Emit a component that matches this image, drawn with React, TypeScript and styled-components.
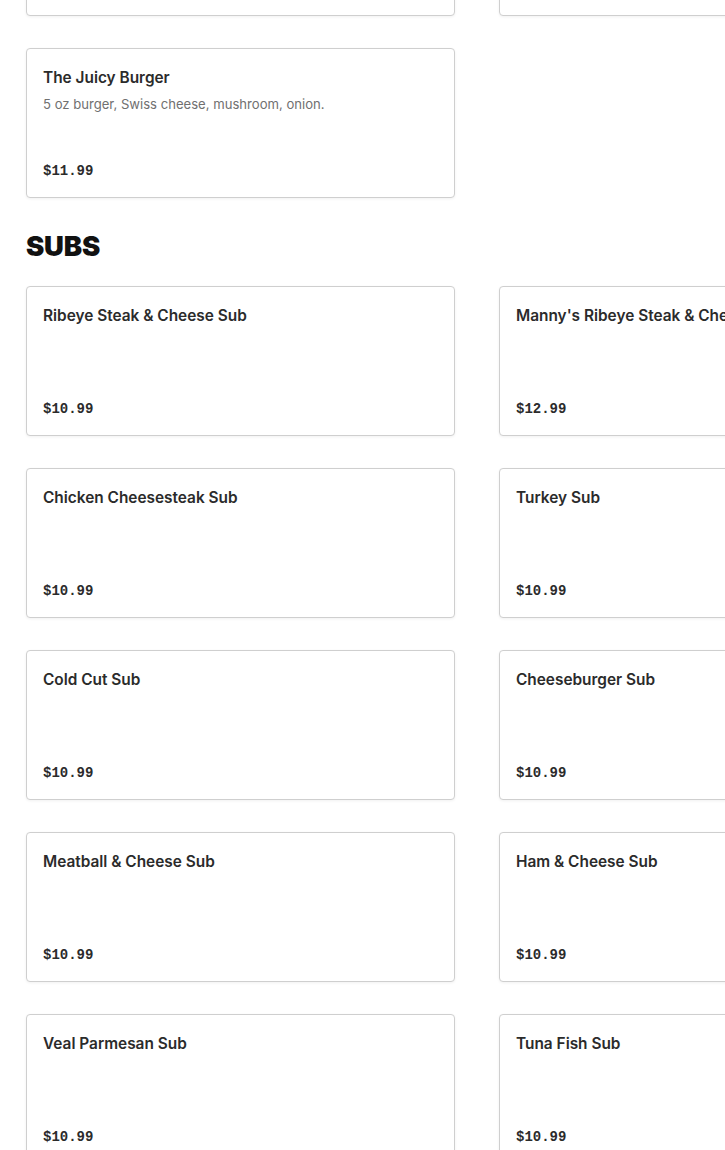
import React from "react";
import styled, { createGlobalStyle } from "styled-components";

const Global = createGlobalStyle`
  html, body { margin: 0; padding: 0; background: #fff; }
  body { font-family: Inter, "Liberation Sans", sans-serif; color: #2b2b2b; overflow: hidden; }
`;

const Page = styled.div`
  width: 1000px;
  padding: 0 0 0 26px;
  margin-top: -134px;
`;

const Grid = styled.div`
  display: grid;
  grid-template-columns: repeat(2, 429px);
  column-gap: 44px;
  row-gap: 32px;
`;

const Heading = styled.h2`
  margin: 32px 0 24px;
  font-family: Inter, "Liberation Sans", sans-serif;
  font-weight: 900;
  font-size: 27.5px;
  line-height: 32px;
  letter-spacing: -0.2px;
  color: #111;
  text-transform: uppercase;
`;

const Card = styled.div`
  box-sizing: border-box;
  height: 150px;
  border: 1px solid #cfcfcf;
  border-radius: 4px;
  box-shadow: 0 1px 3px rgba(0, 0, 0, 0.06);
  padding: 17px 16px 16px 16px;
  display: flex;
  flex-direction: column;
  background: #fff;
`;

const Title = styled.div`
  font-size: 15.4px;
  font-weight: 600;
  line-height: 24px;
  color: #2b2b2b;
  white-space: nowrap;
`;

const Desc = styled.div`
  margin-top: 4px;
  font-size: 13.1px;
  line-height: 20px;
  color: #707070;
  white-space: nowrap;
`;

const Price = styled.div`
  margin-top: auto;
  font-family: "Liberation Mono", "DejaVu Sans Mono", monospace;
  font-weight: 700;
  font-size: 14px;
  line-height: 20px;
  color: #2b2b2b;
`;

type Item = { name: string; desc?: string; price: string };

const MenuCard = ({ item }: { item: Item }) => (
  <Card>
    <Title>{item.name}</Title>
    {item.desc && <Desc>{item.desc}</Desc>}
    <Price>{item.price}</Price>
  </Card>
);

const burgers: Item[] = [
  { name: "Bacon Cheeseburger", desc: "5 oz burger, American cheese, bacon.", price: "$11.99" },
  { name: "Mushroom Burger", desc: "5 oz burger, mushroom, onion.", price: "$11.99" },
  { name: "The Juicy Burger", desc: "5 oz burger, Swiss cheese, mushroom, onion.", price: "$11.99" },
];

const subs: Item[] = [
  { name: "Ribeye Steak & Cheese Sub", price: "$10.99" },
  { name: "Manny's Ribeye Steak & Cheese Sub", price: "$12.99" },
  { name: "Chicken Cheesesteak Sub", price: "$10.99" },
  { name: "Turkey Sub", price: "$10.99" },
  { name: "Cold Cut Sub", price: "$10.99" },
  { name: "Cheeseburger Sub", price: "$10.99" },
  { name: "Meatball & Cheese Sub", price: "$10.99" },
  { name: "Ham & Cheese Sub", price: "$10.99" },
  { name: "Veal Parmesan Sub", price: "$10.99" },
  { name: "Tuna Fish Sub", price: "$10.99" },
];

export default function App() {
  return (
    <>
      <Global />
      <Page>
        <Grid>
          {burgers.map((b) => (
            <MenuCard key={b.name} item={b} />
          ))}
        </Grid>
        <Heading>Subs</Heading>
        <Grid>
          {subs.map((s) => (
            <MenuCard key={s.name} item={s} />
          ))}
        </Grid>
      </Page>
    </>
  );
}
